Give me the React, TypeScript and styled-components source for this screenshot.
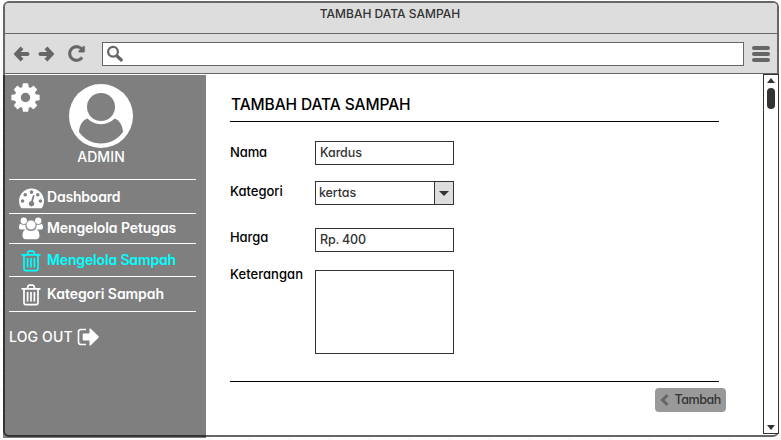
import React from "react";
import styled, { createGlobalStyle } from "styled-components";

const GlobalStyle = createGlobalStyle`
  * { box-sizing: border-box; }
  body {
    margin: 0;
    width: 781px;
    height: 440px;
    overflow: hidden;
    background-color: #fdfdfd;
    background-image:
      linear-gradient(to right, #f5f5f5 1px, transparent 1px),
      linear-gradient(to bottom, #f5f5f5 1px, transparent 1px);
    background-size: 20px 20px;
    background-position: 9px 10px;
    font-family: Inter, "Open Sans", sans-serif;
    font-feature-settings: "cv11";
  }
  svg { display: block; flex: none; }
`;

const Label = styled.span<{ $size?: number; $weight?: number; $spacing?: number }>`
  font-size: ${(p) => p.$size ?? 13}px;
  font-weight: ${(p) => p.$weight ?? 500};
  letter-spacing: ${(p) => p.$spacing ?? 0}px;
  line-height: 18px;
  white-space: nowrap;
`;

const Window = styled.div`
  display: flex;
  flex-direction: column;
  width: 776px;
  height: 436px;
  margin: 1px 0 0 3px;
  border: 2px solid #666;
  border-radius: 6px;
  background: #fff;
`;

const TitleBar = styled.header`
  display: flex;
  justify-content: center;
  height: 31px;
  flex: none;
  padding: 2px 2px 0 0;
  background: #ddd;
  border-bottom: 1px solid #666;
  border-radius: 4px 4px 0 0;
  color: #333;
`;

const Toolbar = styled.nav`
  display: flex;
  align-items: center;
  height: 40px;
  flex: none;
  padding: 0 7px 0 8px;
  background: #ddd;
  border-bottom: 1px solid #666;
  color: #666;
`;

const History = styled.div`
  display: flex;
  align-items: center;
  gap: 8px;
  width: 54px;
`;

const AddressBar = styled.div`
  display: flex;
  width: 642px;
  height: 24px;
  flex: none;
  margin-left: 16px;
  padding: 2px 3px;
  background: #fff;
  border: 1px solid #666;
`;

const Menu = styled.div`
  display: grid;
  gap: 2px;
  width: 18px;
  margin-left: 8px;
`;

const MenuBar = styled.i`
  height: 4px;
  border-radius: 2px;
  background: #666;
`;

const Body = styled.div`
  display: flex;
  flex: 1;
  min-height: 0;
`;

const Sidebar = styled.aside`
  width: 203px;
  height: 363px;
  flex: none;
  margin: 1px 0 0 -2px;
  padding: 0 10px 0 6px;
  background: rgba(0, 0, 0, 0.5);
  color: #fff;
`;

const Profile = styled.section`
  display: grid;
  grid-template-columns: 60px 64px;
  height: 105px;
  border-bottom: 1px solid #fff;
`;

const Gear = styled.div`
  padding-top: 6px;
`;

const Avatar = styled.div`
  display: flex;
  flex-direction: column;
  align-items: center;
  padding-top: 9px;
`;

const NavItem = styled.a<{ $height: number; $top: number; $active?: boolean }>`
  display: grid;
  grid-template-columns: 38px 1fr;
  align-items: start;
  height: ${(p) => p.$height}px;
  padding-top: ${(p) => p.$top}px;
  border-bottom: 1px solid #fff;
  color: ${(p) => (p.$active ? "#0ff" : "#fff")};
`;

const NavIcon = styled.span<{ $shift?: number; $left?: number }>`
  height: 24px;
  margin: ${(p) => p.$shift ?? 0}px 0 0 ${(p) => p.$left ?? 10}px;
`;

const Logout = styled.a`
  display: flex;
  align-items: center;
  gap: 4px;
  margin-top: 16px;
`;

const Main = styled.main`
  flex: 1;
  padding: 22px 0 0 24px;
  color: #000;
`;

const Heading = styled.h1`
  display: flex;
  width: 489px;
  height: 26px;
  margin: 0;
  padding-left: 1px;
  border-bottom: 1px solid #000;
`;

const Field = styled.div<{ $top: number; $labelTop?: number }>`
  display: grid;
  grid-template-columns: 85px 139px;
  margin-top: ${(p) => p.$top}px;
  align-items: start;
  & > span { margin-top: ${(p) => p.$labelTop ?? 0}px; }
`;

const Input = styled.div<{ $height?: number; $pad?: number }>`
  display: flex;
  height: ${(p) => p.$height ?? 24}px;
  padding: 2px 0 0 ${(p) => p.$pad ?? 4}px;
  border: 1px solid #333;
  color: #333;
`;

const DropButton = styled.div`
  display: grid;
  place-items: center;
  width: 19px;
  height: 22px;
  margin: -2px 0 0 auto;
  background: #ddd;
  border-left: 1px solid #333;
`;

const Actions = styled.footer`
  display: flex;
  justify-content: flex-end;
  width: 489px;
  margin-top: 27px;
  border-top: 1px solid #000;
`;

const SubmitButton = styled.button`
  display: flex;
  align-items: center;
  justify-content: space-between;
  width: 71px;
  height: 24px;
  flex: none;
  margin: 6px -7px 0 0;
  padding: 0 5px;
  border: 0;
  border-radius: 4px;
  background: #999;
  color: #333;
  font-family: inherit;
  font-feature-settings: inherit;
`;

const Scrollbar = styled.div`
  display: flex;
  flex-direction: column;
  align-items: center;
  width: 16px;
  height: 360px;
  flex: none;
  margin-right: -2px;
  padding: 3px 0;
  background: #fff;
  border: 1px solid #333;
`;

const Thumb = styled.div`
  width: 8px;
  height: 21px;
  margin: 5px 0 auto;
  border-radius: 4px;
  background: #333;
`;

const Arrow = ({ flip = false }: { flip?: boolean }) => (
  <svg width="17" height="16" viewBox="0 0 17 16">
    <g transform={flip ? "translate(17 0) scale(-1 1)" : undefined} fill="none" stroke="#666" strokeWidth="4">
      <path d="M9 1.800 3.300 8 9 14.200" />
      <path d="M4 8h10.500" strokeLinecap="round" />
    </g>
  </svg>
);

const Triangle = ({ up = false, width = 8 }: { up?: boolean; width?: number }) => (
  <svg width={width} height="5" viewBox="0 0 10 5" preserveAspectRatio="none" fill="#333">
    <path d={up ? "M0 5 5 0l5 5z" : "M0 0h10L5 5z"} />
  </svg>
);

const Reload = () => (
  <svg width="19" height="19" viewBox="0 0 1792 1792" fill="#666">
    <path d="M1664 256v448q0 26-19 45t-45 19h-448q-42 0-59-40-17-39 14-69l138-138q-148-137-349-137-104 0-198.5 40.5t-163.5 109.5-109.5 163.5-40.5 198.5 40.5 198.5 109.5 163.5 163.5 109.5 198.5 40.5q119 0 225-52t179-147q7-10 23-12 15 0 25 9l137 138q9 8 9.5 20.5t-7.5 22.5q-109 132-264 204.5t-327 72.5q-156 0-298-61t-245-164-164-245-61-298 61-298 164-245 245-164 298-61q147 0 284.5 55.5t244.5 156.5l130-129q29-31 70-14 39 17 39 59z" stroke="#666" strokeWidth="40" />
  </svg>
);

const Search = () => (
  <svg width="18" height="18" viewBox="0 0 18 18" fill="none" stroke="#666">
    <circle cx="7" cy="6.800" r="4.900" strokeWidth="2.200" />
    <path d="m11 11 4.300 4" strokeWidth="3.200" strokeLinecap="round" />
  </svg>
);

const Cog = () => (
  <svg width="33" height="33" viewBox="0 0 1792 1792" fill="#fff">
    <path d="M1152 896q0-106-75-181t-181-75-181 75-75 181 75 181 181 75 181-75 75-181zm512-109v222q0 12-8 23t-20 13l-185 28q-19 54-39 91 35 50 107 138 10 12 10 25t-9 23q-27 37-99 108t-94 71q-12 0-26-9l-138-108q-44 23-91 38-16 136-29 186-7 28-36 28h-222q-14 0-24.5-8.5t-11.5-21.5l-28-184q-49-16-90-37l-141 107q-10 9-25 9-14 0-25-11-126-114-165-168-7-10-7-23 0-12 8-23 15-21 51-66.5t54-70.5q-27-50-41-99l-183-27q-13-2-21-12.5t-8-23.5v-222q0-12 8-23t19-13l186-28q14-46 39-92-40-57-107-138-10-12-10-24 0-10 9-23 26-36 98.5-107.5t94.5-71.5q13 0 26 10l138 107q44-23 91-38 16-136 29-186 7-28 36-28h222q14 0 24.5 8.5t11.5 21.5l28 184q49 16 90 37l142-107q9-9 24-9 13 0 25 10 129 119 165 170 7 8 7 22 0 12-8 23-15 21-51 66.5t-54 70.5q26 50 41 98l183 28q13 2 21 12.5t8 23.5z" />
  </svg>
);

const Person = () => (
  <svg width="64" height="64" viewBox="0 0 64 64">
    <circle cx="32" cy="32" r="32" fill="#fff" />
    <g fill="#808080">
      <circle cx="32" cy="23" r="14" />
      <path d="M18.500 34.500c3 3.400 8 5.700 13.500 5.700s10.500-2.300 13.500-5.700c5 1.700 8 6.500 8.500 13.500-5 7-13 11.500-22 11.500S15 55 10 48c.5-7 3.500-11.800 8.500-13.500z" />
    </g>
  </svg>
);

const Gauge = () => (
  <svg width="25" height="25" viewBox="0 0 1792 1792" fill="currentColor">
    <path fillRule="evenodd" d="M384 1152a128 128 0 1 0-256 0a128 128 0 1 0 256 0zM576 704a128 128 0 1 0-256 0a128 128 0 1 0 256 0zM1004 1185l101-382q6-26-7.500-48.500t-38.500-29.500-48 6.500-30 39.500l-101 382q-60 5-107 43.500t-63 98.500q-20 77 20 146t117 89 146-20 89-117q16-60-6-117t-72-91zM1664 1152a128 128 0 1 0-256 0a128 128 0 1 0 256 0zM1024 512a128 128 0 1 0-256 0a128 128 0 1 0 256 0zM1472 704a128 128 0 1 0-256 0a128 128 0 1 0 256 0zM1792 1152q0 261-141 483-19 29-54 29H195q-35 0-54-29Q0 1414 0 1152q0-182 71-348t191-286 286-191 348-71 348 71 286 191 191 286 71 348z" />
  </svg>
);

const Users = () => (
  <svg width="24" height="23" viewBox="0 0 24 23" fill="currentColor">
    <circle cx="4.800" cy="3.800" r="3.200" />
    <circle cx="19.200" cy="3.800" r="3.200" />
    <path d="M1.500 6.800c1.200.9 3.500 1.300 5.200.7-.7 2 .1 3.900 1.300 5H2.200C.7 12.500 0 11.600 0 10.400 0 9 .4 7 1.500 6.800zM22.500 6.800c-1.200.9-3.500 1.300-5.200.7.7 2-.1 3.900-1.300 5h5.800c1.500 0 2.200-.9 2.200-2.100 0-1.400-.4-3.400-1.500-3.600z" />
    <path d="M7.500 12.200c2.400 2.300 6.600 2.300 9 0 3 .1 4 3.500 4 6.600 0 2-1.300 3.400-3.300 3.400H6.800c-2 0-3.300-1.400-3.300-3.400 0-3.100 1-6.500 4-6.600z" />
    <circle cx="12" cy="8" r="4.900" stroke="#808080" strokeWidth=".6" />
  </svg>
);

const Trash = () => (
  <svg width="20" height="22" viewBox="0 0 20 22" fill="none" stroke="currentColor" strokeWidth="1.700">
    <path d="M.500 4.800h19M6.200 4.500l1-2.600q.3-.8 1.200-.8h3.200q.9 0 1.200.8l1 2.600M3 5v13.500q0 2.200 1.900 2.200h10.200q1.900 0 1.900-2.200V5M6.600 8v9.500M10 8v9.500M13.400 8v9.500" />
  </svg>
);

const Exit = () => (
  <svg width="23" height="18" viewBox="0 0 23 18" fill="#fff">
    <path d="M9 1.500H4q-2.500 0-2.500 2.500v10q0 2.500 2.500 2.500h5" fill="none" stroke="#fff" strokeWidth="1.600" />
    <path d="M6.500 5.500h6V1q0-1 1-.4l8 7.700q.7.700 0 1.400l-8 7.700q-1 .6-1-.4v-4.500h-6q-.8 0-.8-.8V6.300q0-.8.800-.8z" />
  </svg>
);

export default function App() {
  return (
    <>
      <GlobalStyle />
      <Window>
        <TitleBar>
          <Label $size={12}>TAMBAH DATA SAMPAH</Label>
        </TitleBar>
        <Toolbar>
          <History>
            <Arrow />
            <Arrow flip />
          </History>
          <Reload />
          <AddressBar><Search /></AddressBar>
          <Menu><MenuBar /><MenuBar /><MenuBar /></Menu>
        </Toolbar>
        <Body>
          <Sidebar>
            <Profile>
              <Gear><Cog /></Gear>
              <Avatar>
                <Person />
                <Label $size={14} $spacing={0.1}>ADMIN</Label>
              </Avatar>
            </Profile>
            <NavItem $height={34} $top={8}>
              <NavIcon $shift={-3}><Gauge /></NavIcon>
              <Label $size={14} $weight={600} $spacing={-0.2}>Dashboard</Label>
            </NavItem>
            <NavItem $height={30} $top={5}>
              <NavIcon $shift={-2}><Users /></NavIcon>
              <Label $size={14} $weight={600} $spacing={-0.1}>Mengelola Petugas</Label>
            </NavItem>
            <NavItem $height={33} $top={7} $active>
              <NavIcon $shift={-1} $left={12}><Trash /></NavIcon>
              <Label $size={14} $weight={600} $spacing={-0.15}>Mengelola Sampah</Label>
            </NavItem>
            <NavItem $height={35} $top={8}>
              <NavIcon $shift={-1} $left={12}><Trash /></NavIcon>
              <Label $size={14} $weight={600} $spacing={-0.05}>Kategori Sampah</Label>
            </NavItem>
            <Logout>
              <Label $size={14} $spacing={0.15}>LOG OUT</Label>
              <Exit />
            </Logout>
          </Sidebar>
          <Main>
            <Heading><Label $size={15.5} $spacing={-0.1}>TAMBAH DATA SAMPAH</Label></Heading>
            <Field $top={19} $labelTop={2}>
              <Label $spacing={-0.1}>Nama</Label>
              <Input><Label $size={12.5} $spacing={-0.1}>Kardus</Label></Input>
            </Field>
            <Field $top={16} $labelTop={1}>
              <Label>Kategori</Label>
              <Input $pad={3}>
                <Label $size={12.5} $spacing={-0.1}>kertas</Label>
                <DropButton><Triangle width={10} /></DropButton>
              </Input>
            </Field>
            <Field $top={23}>
              <Label $spacing={-0.1}>Harga</Label>
              <Input><Label $size={12.5} $spacing={-0.2}>Rp. 400</Label></Input>
            </Field>
            <Field $top={18} $labelTop={-5}>
              <Label $spacing={0.05}>Keterangan</Label>
              <Input $height={84} />
            </Field>
            <Actions>
              <SubmitButton>
                <svg width="9" height="12" viewBox="0 0 9 12" fill="none" stroke="#666" strokeWidth="3">
                  <path d="M7.500 1.200 2.500 6l5 4.800" />
                </svg>
                <Label $size={12.5} $spacing={-0.4}>Tambah</Label>
              </SubmitButton>
            </Actions>
          </Main>
          <Scrollbar>
            <Triangle up />
            <Thumb />
            <Triangle />
          </Scrollbar>
        </Body>
      </Window>
    </>
  );
}
